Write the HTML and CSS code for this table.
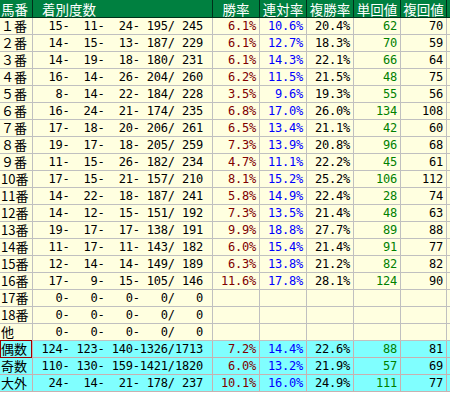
FILE: index.html
```html
<!DOCTYPE html>
<html lang="ja">
<head>
<meta charset="utf-8">
<link rel="stylesheet" href="styles.css">
</head>
<body>
<div class="table">
  <div class="row head">
    <div class="c lab">馬番</div>
    <div class="c cnt">着別度数</div>
    <div class="c">勝率</div>
    <div class="c">連対率</div>
    <div class="c">複勝率</div>
    <div class="c">単回値</div>
    <div class="c">複回値</div>
    <div class="c"></div>
  </div>
  <div class="row"><div class="c lab">１番</div><div class="c cnt"> 15-  11-  24- 195/ 245</div><div class="c win">6.1%</div><div class="c ren">10.6%</div><div class="c fuk">20.4%</div><div class="c tan">62</div><div class="c fk">70</div><div class="c"></div></div>
  <div class="row"><div class="c lab">２番</div><div class="c cnt"> 14-  15-  13- 187/ 229</div><div class="c win">6.1%</div><div class="c ren">12.7%</div><div class="c fuk">18.3%</div><div class="c tan">70</div><div class="c fk">59</div><div class="c"></div></div>
  <div class="row"><div class="c lab">３番</div><div class="c cnt"> 14-  19-  18- 180/ 231</div><div class="c win">6.1%</div><div class="c ren">14.3%</div><div class="c fuk">22.1%</div><div class="c tan">66</div><div class="c fk">64</div><div class="c"></div></div>
  <div class="row"><div class="c lab">４番</div><div class="c cnt"> 16-  14-  26- 204/ 260</div><div class="c win">6.2%</div><div class="c ren">11.5%</div><div class="c fuk">21.5%</div><div class="c tan">48</div><div class="c fk">75</div><div class="c"></div></div>
  <div class="row"><div class="c lab">５番</div><div class="c cnt">  8-  14-  22- 184/ 228</div><div class="c win">3.5%</div><div class="c ren">9.6%</div><div class="c fuk">19.3%</div><div class="c tan">55</div><div class="c fk">56</div><div class="c"></div></div>
  <div class="row"><div class="c lab">６番</div><div class="c cnt"> 16-  24-  21- 174/ 235</div><div class="c win">6.8%</div><div class="c ren">17.0%</div><div class="c fuk">26.0%</div><div class="c tan">134</div><div class="c fk">108</div><div class="c"></div></div>
  <div class="row"><div class="c lab">７番</div><div class="c cnt"> 17-  18-  20- 206/ 261</div><div class="c win">6.5%</div><div class="c ren">13.4%</div><div class="c fuk">21.1%</div><div class="c tan">42</div><div class="c fk">60</div><div class="c"></div></div>
  <div class="row"><div class="c lab">８番</div><div class="c cnt"> 19-  17-  18- 205/ 259</div><div class="c win">7.3%</div><div class="c ren">13.9%</div><div class="c fuk">20.8%</div><div class="c tan">96</div><div class="c fk">68</div><div class="c"></div></div>
  <div class="row"><div class="c lab">９番</div><div class="c cnt"> 11-  15-  26- 182/ 234</div><div class="c win">4.7%</div><div class="c ren">11.1%</div><div class="c fuk">22.2%</div><div class="c tan">45</div><div class="c fk">61</div><div class="c"></div></div>
  <div class="row"><div class="c lab">10番</div><div class="c cnt"> 17-  15-  21- 157/ 210</div><div class="c win">8.1%</div><div class="c ren">15.2%</div><div class="c fuk">25.2%</div><div class="c tan">106</div><div class="c fk">112</div><div class="c"></div></div>
  <div class="row"><div class="c lab">11番</div><div class="c cnt"> 14-  22-  18- 187/ 241</div><div class="c win">5.8%</div><div class="c ren">14.9%</div><div class="c fuk">22.4%</div><div class="c tan">28</div><div class="c fk">74</div><div class="c"></div></div>
  <div class="row"><div class="c lab">12番</div><div class="c cnt"> 14-  12-  15- 151/ 192</div><div class="c win">7.3%</div><div class="c ren">13.5%</div><div class="c fuk">21.4%</div><div class="c tan">48</div><div class="c fk">63</div><div class="c"></div></div>
  <div class="row"><div class="c lab">13番</div><div class="c cnt"> 19-  17-  17- 138/ 191</div><div class="c win">9.9%</div><div class="c ren">18.8%</div><div class="c fuk">27.7%</div><div class="c tan">89</div><div class="c fk">88</div><div class="c"></div></div>
  <div class="row"><div class="c lab">14番</div><div class="c cnt"> 11-  17-  11- 143/ 182</div><div class="c win">6.0%</div><div class="c ren">15.4%</div><div class="c fuk">21.4%</div><div class="c tan">91</div><div class="c fk">77</div><div class="c"></div></div>
  <div class="row"><div class="c lab">15番</div><div class="c cnt"> 12-  14-  14- 149/ 189</div><div class="c win">6.3%</div><div class="c ren">13.8%</div><div class="c fuk">21.2%</div><div class="c tan">82</div><div class="c fk">82</div><div class="c"></div></div>
  <div class="row"><div class="c lab">16番</div><div class="c cnt"> 17-   9-  15- 105/ 146</div><div class="c win">11.6%</div><div class="c ren">17.8%</div><div class="c fuk">28.1%</div><div class="c tan">124</div><div class="c fk">90</div><div class="c"></div></div>
  <div class="row"><div class="c lab">17番</div><div class="c cnt">  0-   0-   0-   0/   0</div><div class="c"></div><div class="c"></div><div class="c"></div><div class="c"></div><div class="c"></div><div class="c"></div></div>
  <div class="row"><div class="c lab">18番</div><div class="c cnt">  0-   0-   0-   0/   0</div><div class="c"></div><div class="c"></div><div class="c"></div><div class="c"></div><div class="c"></div><div class="c"></div></div>
  <div class="row"><div class="c lab">他</div><div class="c cnt">  0-   0-   0-   0/   0</div><div class="c"></div><div class="c"></div><div class="c"></div><div class="c"></div><div class="c"></div><div class="c"></div></div>
  <div class="row sum"><div class="c lab sel">偶数</div><div class="c cnt">124- 123- 140-1326/1713</div><div class="c win">7.2%</div><div class="c ren">14.4%</div><div class="c fuk">22.6%</div><div class="c tan">88</div><div class="c fk">81</div><div class="c"></div></div>
  <div class="row sum"><div class="c lab">奇数</div><div class="c cnt">110- 130- 159-1421/1820</div><div class="c win">6.0%</div><div class="c ren">13.2%</div><div class="c fuk">21.9%</div><div class="c tan">57</div><div class="c fk">69</div><div class="c"></div></div>
  <div class="row sum"><div class="c lab">大外</div><div class="c cnt"> 24-  14-  21- 178/ 237</div><div class="c win">10.1%</div><div class="c ren">16.0%</div><div class="c fuk">24.9%</div><div class="c tan">111</div><div class="c fk">77</div><div class="c"></div></div>
</div>
</body>
</html>
```

FILE: styles.css
```css
html, body {
  margin: 0;
  padding: 0;
  background: #ffffff;
  overflow: hidden;
}
.table {
  width: max-content;
  font-family: "DejaVu Sans Mono", "Noto Sans CJK JP", monospace;
  font-size: 12px;
  letter-spacing: -0.2px;
  color: #000000;
}
.row {
  display: grid;
  grid-template-columns: 33px 180px 47px 47px 47px 47px 46px 20px;
  height: 17px;
  background: #ffffe0;
}
.row.head {
  height: 18px;
  background: #008040;
}
.row.sum {
  background: #80ffff;
}
.c {
  box-sizing: border-box;
  height: 100%;
  border-right: 1px solid #c0c0c0;
  border-bottom: 1px solid #c0c0c0;
  display: flex;
  align-items: center;
  justify-content: flex-end;
  padding: 0 3px 0 0;
  white-space: pre;
  line-height: 16px;
}
.row.sum .c {
  border-color: #c8b0b0;
}
.head .c {
  border-right-color: #00301a;
  border-bottom-color: #00301a;
  color: #ffffff;
  font-family: "Noto Sans CJK JP", sans-serif;
  font-size: 13.5px;
  letter-spacing: 0;
  justify-content: center;
  padding: 0;
}
.head .c.lab {
  justify-content: flex-start;
  padding-left: 1px;
}
.head .c.cnt {
  justify-content: flex-start;
  padding-left: 9px;
}
.lab {
  font-family: "Noto Sans CJK JP", sans-serif;
  font-size: 13px;
  letter-spacing: 0;
  justify-content: flex-start;
  padding: 0 0 0 1px;
}
.cnt {
  padding-right: 9px;
}
.win { color: #800000; }
.ren { color: #0000ff; }
.fuk { color: #000000; }
.tan { color: #008000; }
.fk { color: #000000; }
.sel {
  position: relative;
}
.sel::after {
  content: "";
  position: absolute;
  left: 0;
  top: -1px;
  right: 0;
  bottom: -1px;
  border: 1px solid #a00000;
}
```
